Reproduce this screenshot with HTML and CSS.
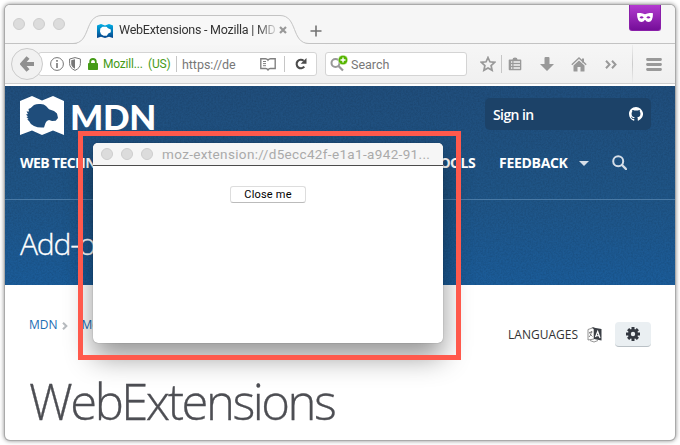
FILE: index.html
```html
<!DOCTYPE html>
<html lang="en">
<head>
<meta charset="utf-8">
<title>WebExtensions - Mozilla | MDN</title>
<link rel="stylesheet" href="styles.css">
</head>
<body>
<div class="browser">
  <div class="tabstrip">
    <div class="lights"><i></i><i></i><i></i></div>
    <div class="tab">
      <svg class="tab-shape" width="248" height="30" viewBox="0 0 248 30"><path d="M0 28.500H-4C14 28.500 7 .5 25 .5H203C221 .5 214 28.500 232 28.500H248V30H0Z" fill="#f7f7f7"/><path d="M-4 28.500C14 28.500 7 .5 25 .5H203C221 .5 214 28.500 232 28.500H248" fill="none" stroke="#c3c3c3"/></svg>
      <svg class="favicon" width="16" height="14" viewBox="0 0 16 14"><defs><linearGradient id="fav" x2="0" y2="1"><stop stop-color="#00aee5"/><stop offset="1" stop-color="#06458c"/></linearGradient></defs><path d="M0 1.500 4 0l4 1.500L12 0l4 1.500V14l-4-1.300L8 14l-4-1.300L0 14Z" fill="url(#fav)"/><path d="M3.300 4.500 5.500 2.800h4l1.500 1.500 2.800 1.200v2.700l-2.500 1.300-1.500 2.200H6.600L4 10.200 3 7.500Z" fill="#fff"/></svg>
      <span class="tab-title">WebExtensions - Mozilla | MD</span>
      <svg class="tab-close" width="8" height="8" viewBox="0 0 8 8"><path d="m1 1 6 6m0-6L1 7" stroke="#999" stroke-width="2.200"/></svg>
    </div>
    <svg class="newtab" width="12" height="12" viewBox="0 0 12 12"><path d="M6 .5v11M.5 6h11" stroke="#737373" stroke-width="1.600"/></svg>
    <div class="private"><svg width="16" height="9" viewBox="0 0 16 9"><path fill-rule="evenodd" d="M0 .3Q4-.7 8 1.300 12-.7 16 .3 16 9 11.500 9 9.500 9 8 6.800 6.500 9 4.500 9 0 9 0 .3ZM2.500 4.500Q4.700 6.500 6.700 4.500 4.600 2.200 2.500 4.500Zm6.800 0q2 2 4.200 0-2.100-2.300-4.200 0Z" fill="#fff"/></svg></div>
  </div>
  <div class="toolbar">
    <div class="back"><svg width="14" height="16" viewBox="0 0 14 16"><path d="M8 1.500 2.300 8 8 14.500M3 8h11" fill="none" stroke="#909090" stroke-width="4"/></svg></div>
    <div class="urlbar">
      <svg class="info" width="14" height="14" viewBox="0 0 14 14"><circle cx="7" cy="7" r="6.400" fill="none" stroke="#757575"/><path d="M7 3v1.800M7 6v5" stroke="#757575" stroke-width="1.600"/></svg>
      <svg class="shield" width="12" height="14" viewBox="0 0 12 14"><path d="M6 .6 11.400 2v4.500Q11.400 11 6 13.400.6 11 .6 6.500V2Z" fill="#fff" stroke="#777"/><path d="M6 2.200 2.200 3.200v3.300Q2.200 10 6 11.800Z" fill="#777"/></svg>
      <svg class="lock" width="10" height="12" viewBox="0 0 10 12"><path d="M2.200 6V3.800a2.800 2.800 0 0 1 5.600 0V6" fill="none" stroke="#459b17" stroke-width="1.800"/><rect y="5" width="10" height="7" rx=".8" fill="#459b17"/></svg>
      <span class="owner">Mozill...</span><span class="country">(US)</span>
      <i class="sep"></i>
      <span class="address">https://de</span>
      <svg class="reader" width="16" height="13" viewBox="0 0 16 13"><path d="M8 2.200Q7 .8 5.500.8H.8v9.700h5Q7.200 10.500 8 12 8.800 10.500 10.200 10.500h5V.8h-4.700Q9 .8 8 2.200Z" fill="none" stroke="#808080" stroke-width="1.400"/><path d="M3 3.500h3M3 5.600h3M3 7.700h3" stroke="#808080"/></svg>
      <i class="sep faint"></i>
      <svg class="reload" width="12" height="12" viewBox="0 0 12 12"><path d="M9.300 8.700A4.300 4.300 0 1 1 8.700 2.700" fill="none" stroke="#4c4c4c" stroke-width="2.100"/><path d="M11.500 0v5.800H5.700Z" fill="#4c4c4c"/></svg>
    </div>
    <div class="search">
      <svg width="20" height="19" viewBox="0 0 20 19"><circle cx="5.500" cy="8" r="4" fill="none" stroke="#999" stroke-width="2"/><path d="m8.500 11 4.500 4.500" stroke="#999" stroke-width="2.200"/><circle cx="13" cy="5" r="4.800" fill="#56b500" stroke="#fff" stroke-width=".5"/><path d="M13 2.500v5M10.500 5h5" stroke="#fff" stroke-width="1.400"/></svg>
      <span>Search</span>
    </div>
    <div class="actions">
      <svg width="16" height="16" viewBox="0 0 16 16"><path d="m8 1.500 1.900 4.300 4.800.5-3.600 3.200 1 4.800L8 11.900l-4.100 2.400 1-4.800L1.300 6.300l4.800-.5Z" fill="none" stroke="#999" stroke-width="1.700"/></svg>
      <i class="sep action-sep"></i>
      <svg class="list" width="14" height="14" viewBox="0 0 14 14"><path d="M4.500 2.500q0-2 2.500-2t2.500 2H12.500q.8 0 .8.800v9q0 .9-.8.900h-11q-.8 0-.8-.9v-9q0-.8.8-.8Z" fill="#999"/><path d="M3 5h1.300M5.500 5H12M3 8h1.300M5.500 8H12M3 11h1.300M5.500 11H12" stroke="#f2f2f2" stroke-width="1.300"/></svg>
      <svg class="down" width="14" height="14" viewBox="0 0 14 14"><path d="M4.500 1q0-1 1-1h3q1 0 1 1v6H14l-7 7-7-7h4.500Z" fill="#999"/></svg>
      <svg class="home" width="16" height="15" viewBox="0 0 16 15"><path d="m.8 7.700 7.200-6.700 7.200 6.700" fill="none" stroke="#999" stroke-width="1.400"/><path d="M11 1.500h2v4h-2ZM8 3.500l5.500 5V14q0 .6-.6.6H9.500V10h-3v4.600H3.100q-.6 0-.6-.6V8.500Z" fill="#999"/></svg>
      <svg class="more" width="12" height="9" viewBox="0 0 12 9"><path d="m1 .8 3.500 3.700L1 8.200M7 .8l3.500 3.700L7 8.200" fill="none" stroke="#999" stroke-width="2"/></svg>
      <i class="menu-sep"></i>
      <svg class="menu" width="16" height="13" viewBox="0 0 16 13"><path d="M1.500 1.500h13M1.500 6.500h13M1.500 11.500h13" stroke="#999" stroke-width="2.800" stroke-linecap="round"/></svg>
    </div>
  </div>
  <div class="page">
    <header class="hero">
      <svg class="grain" width="670" height="199"><filter id="grain"><feTurbulence type="fractalNoise" baseFrequency=".6" numOctaves="2" seed="4"/><feColorMatrix values="0 0 0 0 0  0 0 0 0 0  0 0 0 0 0  1.200 0 0 0 -.4"/></filter><rect width="670" height="199" filter="url(#grain)" opacity=".17"/></svg>
      <div class="masthead">
        <svg class="logo" width="44" height="39" viewBox="0 0 44 39"><path d="M0 5 12 0 22 4.500 33 0 44 5V39L33 34.500 22 39 12 34.500 0 39Z" fill="#fff"/><path d="M10.700 12 14 9Q17 7.500 20.700 8 24 8 26 10L29 13.300 34 15 37 17.500 38 22 35.700 24.700 32 25 29 24Q26.500 24.500 25.500 27L24 31.500Q18 32 14 30 10 28 9 25L7.200 23.500 8.500 23 6.500 21 8 20.500 6 18.500 8 18 6.500 15.500 9 15.500 8.500 13Z" fill="#1f4d7b"/></svg>
        <span class="wordmark">MDN</span>
        <div class="signin"><span>Sign in</span><svg width="14" height="14" viewBox="0 0 16 16"><path fill="#fff" d="M8 0C3.580 0 0 3.580 0 8c0 3.540 2.290 6.530 5.470 7.590.4.070.55-.17.55-.38v-1.490c-2.010.37-2.530-.49-2.690-.94-.09-.23-.48-.94-.82-1.130-.28-.15-.68-.52-.01-.53.63-.01 1.080.58 1.230.82.720 1.210 1.870.87 2.330.66.070-.52.28-.87.51-1.070-1.780-.2-3.640-.89-3.640-3.950 0-.87.31-1.590.82-2.150-.08-.2-.36-1.020.08-2.120 0 0 .67-.21 2.200.82A7.500 7.500 0 0 1 8 3.870c.68 0 1.360.09 2 .26 1.530-1.040 2.200-.82 2.200-.82.44 1.100.16 1.920.08 2.120.51.56.82 1.270.82 2.150 0 3.070-1.870 3.750-3.650 3.950.29.25.54.73.54 1.480v2.200c0 .21.15.46.55.38A8 8 0 0 0 8 0Z"/></svg></div>
      </div>
      <nav class="nav">
        <span>WEB TECHNOLOGIES</span>
        <span class="tools">TOOLS</span>
        <span class="feedback">FEEDBACK</span>
        <i class="caret"></i>
        <svg width="15" height="15" viewBox="0 0 15 15"><circle cx="6.200" cy="6.200" r="5" fill="none" stroke="#d6dee8" stroke-width="2"/><path d="m10 10 4 4" stroke="#d6dee8" stroke-width="2.400" stroke-linecap="round"/></svg>
      </nav>
      <div class="zone">Add-ons</div>
    </header>
    <main class="content">
      <div class="crumbs">
        <a>MDN</a><svg width="6" height="8" viewBox="0 0 6 8"><path d="m1 .8 3.300 3.200L1 7.200" fill="none" stroke="#b8bcc0" stroke-width="2.100"/></svg><a>Mozilla</a>
        <span class="languages">LANGUAGES</span>
        <svg class="translate" width="15" height="17" viewBox="0 0 15 17"><path d="M1 3.500 7 1.500V13l-6 1ZM3 14.500q4 3 8 0" fill="none" stroke="#777" stroke-width=".8"/><path d="m4.500 1.200 2.500 2V13l7.500 1.500V3Z" fill="#3b3f45"/><path d="M2 6.500 5.500 6M4.500 5Q4 10 2 11M2.500 7.500l3 3" fill="none" stroke="#666" stroke-width=".8"/><path d="M8.500 11 10.700 5.500 13 12M9.200 9.500l3 .5" fill="none" stroke="#fff" stroke-width="1.200"/></svg>
        <button class="gear" aria-label="Settings"><svg width="14" height="14" viewBox="0 0 14 14"><path fill="none" stroke="#333840" stroke-width="3" d="M7 0v14M0 7h14M2.100 2.100l9.800 9.800M11.900 2.100l-9.800 9.800"/><circle cx="7" cy="7" r="5" fill="#333840"/><circle cx="7" cy="7" r="2.200" fill="#eaeff2"/></svg></button>
      </div>
      <h1>WebExtensions</h1>
    </main>
  </div>
</div>
<div class="popup">
  <div class="popup-bar"><div class="lights"><i></i><i></i><i></i></div><span>moz-extension://d5ecc42f-e1a1-a942-91...</span></div>
  <div class="popup-body"><button class="close">Close me</button></div>
</div>
<div class="highlight"></div>
</body>
</html>
```
FILE: styles.css
```css
* { box-sizing: border-box; }
body { margin: 0; width: 680px; height: 445px; padding: 5px; overflow: hidden; background: #fff; font-family: Roboto, sans-serif; }
svg { display: block; flex: none; }
i { display: block; flex: none; }

.browser { width: 670px; height: 435px; border-radius: 5px; overflow: hidden; background: #fff; box-shadow: 0 0 0 1px #aaa, 0 0 4px 1px rgba(0,0,0,.45); }
.lights { display: flex; gap: 8px; }
.lights i { width: 12px; height: 12px; border-radius: 50%; background: #dcdcdc; border: 1px solid #cdcdcd; }

.tabstrip { position: relative; display: flex; height: 39px; padding-left: 8px; background: #f6f6f6; border-bottom: 1px solid #c3c3c3; }
.tabstrip .lights { margin-top: 13px; }
.tab { position: relative; display: flex; width: 248px; height: 29px; margin: 10px 0 0 12px; padding-left: 20px; }
.tab-shape { position: absolute; left: 0; top: 0; overflow: visible; }
.favicon, .tab-title, .tab-close { position: relative; }
.favicon { margin-top: 9px; }
.tab-title { width: 156px; height: 20px; margin: 5px 0 0 6px; white-space: nowrap; font-size: 12.5px; line-height: 20px; letter-spacing: -.25px; color: #333; -webkit-mask-image: linear-gradient(90deg, #000 88%, rgba(0,0,0,.2)); mask-image: linear-gradient(90deg, #000 88%, rgba(0,0,0,.2)); }
.tab-close { margin: 11px 0 0 4px; }
.newtab { margin: 20px 0 0 -15px; position: relative; }
.private { display: grid; place-items: center; width: 32px; height: 26px; margin: 0 14px 0 auto; border-radius: 0 0 3px 3px; background: linear-gradient(#b33bd0, #750e99); border: 1px solid #8a1fa9; border-top: 0; }

.toolbar { display: flex; height: 40px; padding: 4px 0 0 6px; background: linear-gradient(#f6f6f6, #f0f0f0); border-bottom: 1px solid #cfcfcf; }
.back { position: relative; z-index: 1; display: grid; place-items: center; width: 32px; height: 32px; flex: none; border: 1px solid #cbcbcb; border-radius: 50%; background: #f1f1f1; }
.urlbar { display: flex; align-items: center; width: 279px; height: 24px; margin: 4px 0 0 -5px; padding-left: 11px; background: #fff; border: 1px solid #d4d4d4; border-radius: 3px; flex: none; font-size: 13px; white-space: nowrap; }
.shield { margin-left: 5px; }
.lock { margin-left: 7px; }
.owner, .country { color: #459b17; font-size: 12px; }
.owner { width: 45px; margin-left: 5px; letter-spacing: -.2px; }
.country { width: 28px; letter-spacing: -.2px; }
.sep { width: 1px; height: 16px; background: #c6c6c6; }
.address { width: 54px; margin-left: 5px; color: #777; font-size: 12.5px; letter-spacing: -.05px; }
.reader { margin-left: 24px; }
.faint { margin-left: 8px; }
.reload { margin-left: 10px; }
.search { display: flex; align-items: center; width: 142px; height: 24px; margin: 4px 0 0 8px; padding-left: 4px; flex: none; background: #fff; border: 1px solid #d4d4d4; border-radius: 3px; font-size: 12.5px; color: #777; }
.search span { margin-left: 1px; }
.actions { display: flex; align-items: center; height: 32px; margin-left: 13px; }
.action-sep { margin: 0 6px 0 5px; height: 18px; }
.down { margin-left: 18px; }
.home { margin-left: 17px; }
.more { margin-left: 18px; }
.menu-sep { width: 1px; height: 38px; margin-left: 15px; background: linear-gradient(#eee, #ccc, #eee); }
.menu { margin-left: 13px; }

.page { padding-top: 2px; font-family: "Open Sans", sans-serif; }
.hero { position: relative; height: 199px; background: linear-gradient(#204e7c, #1f5587 57%, #1b5c99); color: #fff; }
.hero::after { content: ""; position: absolute; left: 0; top: 113px; width: 100%; height: 1px; background: #4a7aa6; }
.grain { position: absolute; left: 0; top: 0; }
.masthead, .nav, .zone { position: relative; display: flex; }
.masthead { height: 62px; padding: 11px 0 0 15px; }
.logo { margin-top: -1px; }
.wordmark { margin: -5px 0 0 6px; font: 900 35px/48px Lato, sans-serif; letter-spacing: -.4px; }
.signin { display: flex; align-items: center; justify-content: space-between; width: 166px; height: 32px; margin: 1px 24px 0 auto; padding: 0 8px; border-radius: 5px; background: #1c4268; font-size: 14px; font-weight: 600; letter-spacing: -.6px; }
.nav { align-items: center; height: 30px; padding-left: 15px; font-size: 14px; font-weight: 700; letter-spacing: -.6px; white-space: nowrap; }
.nav span { margin-top: -2px; }
.nav span:first-child { width: 160px; }
.nav .tools { width: 100px; margin-left: 195px; text-align: right; }
.feedback { width: 70px; margin-left: 24px; letter-spacing: -.3px; }
.caret { margin-left: 10px; border: 5px solid transparent; border-top-color: #d6dee8; border-bottom: 0; }
.nav svg { margin-left: 23px; margin-top: -2px; }
.zone { padding: 46px 0 0 15px; font-size: 30px; font-weight: 300; line-height: 40px; letter-spacing: -1.200px; -webkit-text-stroke: .3px #fff; }

.content { padding: 36px 24px 0; color: #333; }
.crumbs { display: flex; align-items: center; height: 26px; font-size: 12px; }
.crumbs a { color: #1a6cb3; margin-top: -19px; }
.crumbs svg { flex: none; }
.crumbs a + svg { margin: -17px 14px 0 4px; }
.languages { margin-left: auto; font-size: 12px; }
.translate { margin-left: 9px; }
.gear { display: grid; place-items: center; width: 36px; height: 25px; margin-left: 13px; padding: 0; border: 0; border-bottom: 1px solid #b9c0c5; border-radius: 4px; background: #eaeff2; }
h1 { margin: 20px 0 0; font-size: 49px; line-height: 68px; font-weight: 300; letter-spacing: -2.500px; color: #4d4e53; -webkit-text-stroke: .3px #4d4e53; }

.popup { position: absolute; left: 93px; top: 143px; width: 350px; height: 200px; border-radius: 5px; overflow: hidden; background: #fff; box-shadow: 0 0 1px rgba(0,0,0,.5), 0 14px 28px rgba(0,0,0,.42); }
.popup-bar { display: flex; height: 23px; padding-left: 8px; background: #f6f6f6; border-bottom: 1px solid #4c4c4c; }
.popup-bar .lights { margin-top: 5px; }
.popup-bar span { margin-left: 9px; color: #aaa; font-size: 13.5px; line-height: 23px; letter-spacing: .35px; white-space: nowrap; }
.popup-body { display: flex; justify-content: center; padding-top: 20px; }
.close { width: 76px; height: 17px; padding: 0; border: 1px solid #ddd; border-bottom-color: #bbb; border-radius: 3px; background: #fff; font: 11px/14px Roboto, sans-serif; letter-spacing: .2px; color: #000; }
.highlight { position: absolute; left: 78px; top: 131px; width: 383px; height: 229px; border: 5px solid #ff594c; }
```
